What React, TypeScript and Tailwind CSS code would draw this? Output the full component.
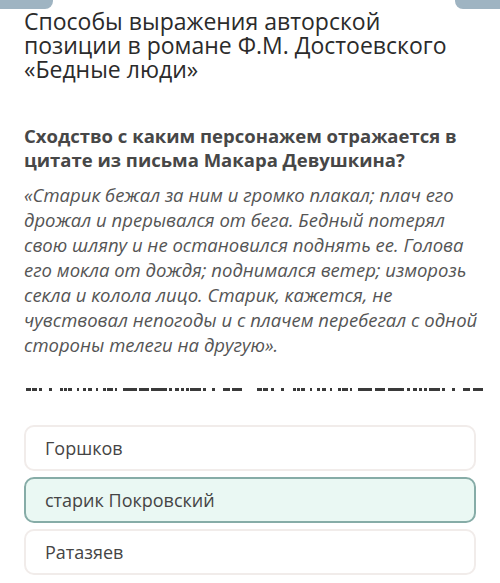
import React from "react";

const half: [number, number][] = [
  [26, 5], [32, 5], [39, 3], [49, 3], [60, 3], [64, 3], [68, 4], [77, 2], [83, 3], [88, 4],
  [96, 2], [103, 3], [107, 6], [115, 2], [123, 14], [139, 10], [151, 16], [169, 3], [175, 4], [181, 3], [186, 3],
  [190, 11], [203, 3], [212, 3], [223, 7], [232, 10],
];
const segs = [
  ...half,
  ...half.map(([x, w]) => [x + 231 + Math.round(((x - 26) / 216) * 10), w] as [number, number]),
];

function Option({ text, selected }: { text: string; selected?: boolean }) {
  return (
    <div
      className={
        selected
          ? "h-[46px] flex items-center px-[19px] rounded-[10px] border-2 border-[#86aca7] bg-[#eaf8f3]"
          : "h-[46px] flex items-center px-[19px] rounded-[10px] border-2 border-[#f1ecea] bg-white"
      }
    >
      <span className="text-[18px] text-[#454545]">{text}</span>
    </div>
  );
}

export default function App() {
  return (
    <div
      className="w-[500px] h-[583px] bg-white overflow-hidden flex flex-col"
      style={{ fontFamily: '"Open Sans", "Noto Sans", sans-serif' }}
    >
      <div className="flex justify-between h-[9px] shrink-0">
        <div className="w-[53px] h-[9px] bg-[#9fb4c2] rounded-br-[8px]" />
        <div className="w-[45px] h-[9px] bg-[#9fb4c2] rounded-bl-[8px]" />
      </div>
      <div className="px-[24px]">
        <h1 className="text-[23px] leading-[24px] text-[#2b2b2b] font-normal whitespace-nowrap">
          Способы выражения авторской
          <br />
          позиции в романе Ф.М. Достоевского
          <br />
          «Бедные люди»
        </h1>
        <p className="mt-[43px] text-[18.5px] leading-[24px] font-bold text-[#474747] whitespace-nowrap">
          Сходство с каким персонажем отражается в
          <br />
          цитате из письма Макара Девушкина?
        </p>
        <p className="mt-[10px] text-[18.5px] leading-[25px] italic text-[#555555] whitespace-nowrap">
          «Старик бежал за ним и громко плакал; плач его
          <br />
          дрожал и прерывался от бега. Бедный потерял
          <br />
          свою шляпу и не остановился поднять ее. Голова
          <br />
          его мокла от дождя; поднимался ветер; изморозь
          <br />
          секла и колола лицо. Старик, кажется, не
          <br />
          чувствовал непогоды и с плачем перебегал с одной
          <br />
          стороны телеги на другую».
        </p>
      </div>
      <svg className="mt-[31px] shrink-0" width="500" height="3" viewBox="0 0 500 3">
        {segs.map(([x, w], i) => (
          <rect key={i} x={x} y={0} width={w} height={3} fill="#3a3a3a" />
        ))}
      </svg>
      <div className="mt-[34px] px-[24px] flex flex-col gap-[6px]">
        <Option text="Горшков" />
        <Option text="старик Покровский" selected />
        <Option text="Ратазяев" />
      </div>
    </div>
  );
}
